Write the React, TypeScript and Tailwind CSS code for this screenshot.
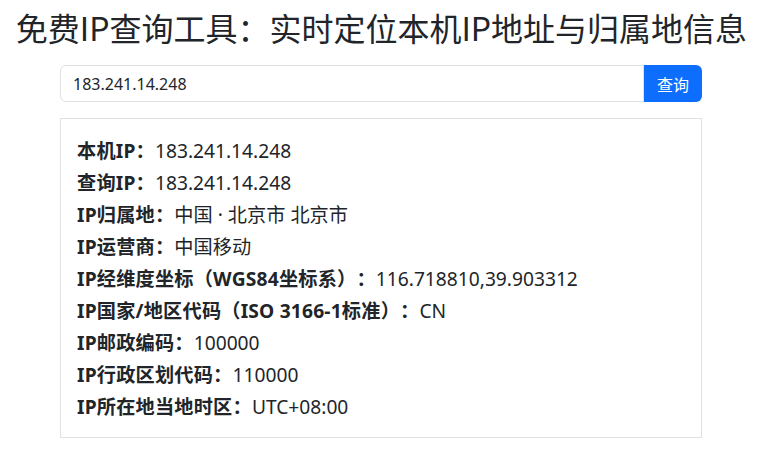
import React from "react";

const rows: [string, string][] = [
  ["本机IP：", "183.241.14.248"],
  ["查询IP：", "183.241.14.248"],
  ["IP归属地：", "中国 · 北京市 北京市"],
  ["IP运营商：", "中国移动"],
  ["IP经维度坐标（WGS84坐标系）：", "116.718810,39.903312"],
  ["IP国家/地区代码（ISO 3166-1标准）：", "CN"],
  ["IP邮政编码：", "100000"],
  ["IP行政区划代码：", "110000"],
  ["IP所在地当地时区：", "UTC+08:00"],
];

export default function App() {
  return (
    <div
      className="w-[763px] h-[451px] bg-white text-[#212529] overflow-hidden [text-spacing-trim:space-all]"
      style={{ fontFamily: '"Noto Sans", "Noto Sans CJK SC", sans-serif' }}
    >
      <h1
        className="pt-[8px] text-center text-[32px] leading-[38px] font-normal text-[#212529]"
        style={{ fontFamily: '"Noto Sans CJK SC", sans-serif' }}
      >
        免费IP查询工具：实时定位本机IP地址与归属地信息
      </h1>
      <div className="ml-[60px] w-[642px] mt-[19px] flex h-[37px]">
        <div className="flex-1 flex items-center border border-[#dee2e6] rounded-l-[6px] px-[12px] text-[16px] text-[#212529]">
          183.241.14.248
        </div>
        <button
          className="w-[58px] bg-[#0d6efd] text-white text-[16px] rounded-r-[6px]"
          style={{ fontFamily: '"Noto Sans CJK SC", sans-serif' }}
        >
          查询
        </button>
      </div>
      <div className="ml-[60px] w-[642px] mt-[16px] border border-[#dee2e6] px-[16px] pt-[16px] pb-[14px]">
        {rows.map(([k, v]) => (
          <div key={k} className="text-[19.2px] leading-[32px] whitespace-nowrap">
            <span className="font-bold tracking-[0.2px]">{k}</span>
            <span>{v}</span>
          </div>
        ))}
      </div>
    </div>
  );
}
